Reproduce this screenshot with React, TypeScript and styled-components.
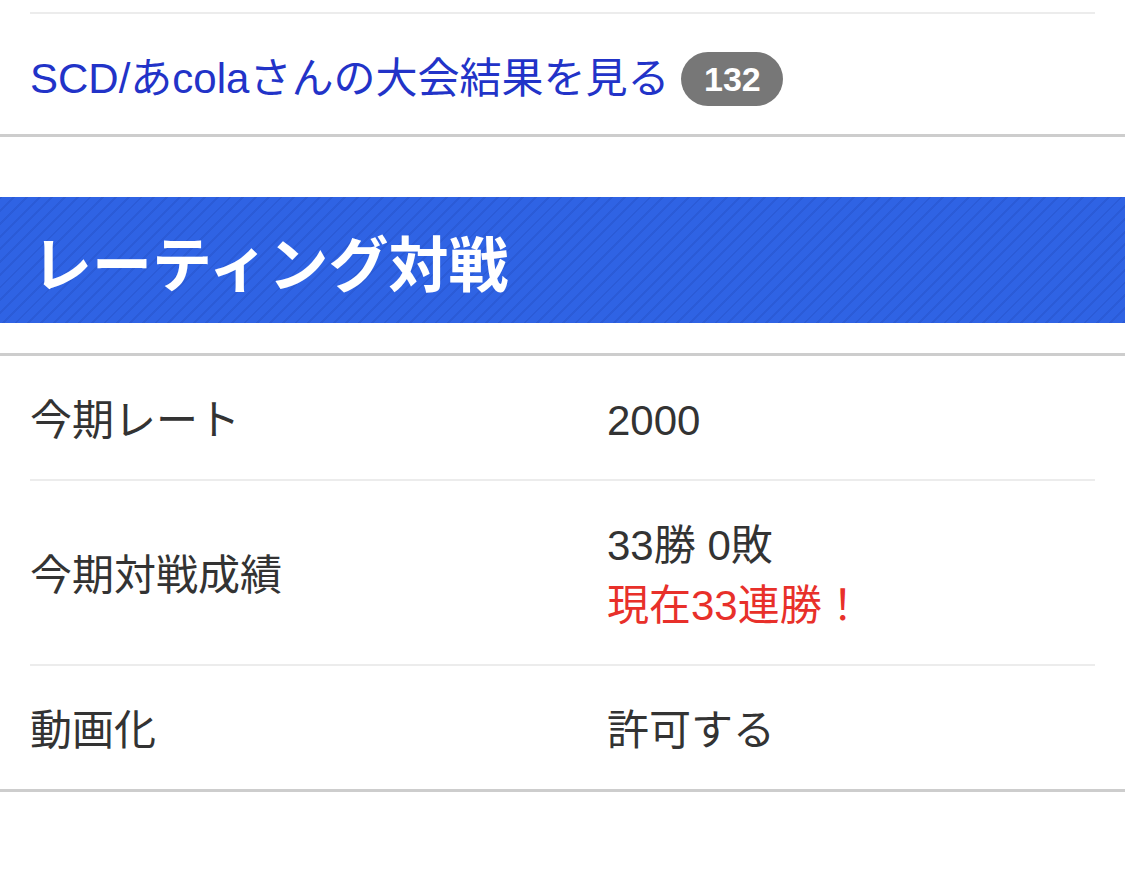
import styled, { createGlobalStyle } from "styled-components";

const GlobalStyle = createGlobalStyle`
	html, body {
		margin: 0;
		padding: 0;
		background: #fff;
	}
	body {
		font-family: "Liberation Sans", "Noto Sans CJK JP", sans-serif;
		color: #333;
		-webkit-font-smoothing: antialiased;
	}
`;

const Page = styled.div`
	width: 1125px;
	padding-top: 12px;
`;

const LinkBlock = styled.div`
	margin: 0 30px;
	border-top: 2px solid #ececec;
`;

const LinkRow = styled.div`
	display: flex;
	align-items: center;
	gap: 12px;
	height: 120px;
	border-bottom: 3px solid #cdcdcd;
	margin: 0 -30px;
	padding: 0 30px;
	& > a {
		color: #2233c8;
		font-size: 42px;
		text-decoration: none;
	}
`;

const Badge = styled.span`
	display: inline-flex;
	align-items: center;
	justify-content: center;
	margin-top: 10px;
	height: 54px;
	min-width: 102px;
	padding: 0 16px;
	box-sizing: border-box;
	border-radius: 27px;
	background: #777;
	color: #fff;
	font-size: 34px;
	font-weight: 700;
`;

const SectionTitle = styled.h2`
	margin: 60px 0 30px;
	height: 126px;
	display: flex;
	align-items: center;
	padding: 0 32px;
	color: #fff;
	font-size: 60px;
	font-weight: 700;
	font-family: "Noto Sans CJK JP", sans-serif;
	background-color: #2f63e4;
	background-image: repeating-linear-gradient(
		135deg,
		rgba(20, 50, 150, 0.16) 0px,
		rgba(20, 50, 150, 0.16) 2px,
		transparent 2px,
		transparent 9px
	);
`;

const Table = styled.div`
	border-top: 3px solid #cdcdcd;
	border-bottom: 3px solid #cdcdcd;
	padding: 0 30px;
`;

const Row = styled.div<{ $last?: boolean }>`
	display: grid;
	grid-template-columns: 577px 1fr;
	align-items: center;
	padding: 35px 0 28px;
	line-height: 60px;
	font-size: 42px;
	border-bottom: ${(p) => (p.$last ? "none" : "2px solid #ececec")};
`;

const Label = styled.div`
	color: #333;
`;

const Value = styled.div`
	color: #333;
	& > span {
		display: block;
		color: #e8302a;
	}
`;

const rows = [
	{ label: "今期レート", value: "2000" },
	{ label: "今期対戦成績", value: "33勝 0敗", note: "現在33連勝！" },
	{ label: "動画化", value: "許可する" },
];

const App = () => {
	return (
		<Page>
			<GlobalStyle />
			<LinkBlock>
				<LinkRow>
					<a href="#">SCD/あcolaさんの大会結果を見る</a>
					<Badge>132</Badge>
				</LinkRow>
			</LinkBlock>
			<SectionTitle>レーティング対戦</SectionTitle>
			<Table>
				{rows.map((r, i) => (
					<Row key={r.label} $last={i === rows.length - 1}>
						<Label>{r.label}</Label>
						<Value>
							{r.value}
							{r.note && <span>{r.note}</span>}
						</Value>
					</Row>
				))}
			</Table>
		</Page>
	);
};

export default App;
